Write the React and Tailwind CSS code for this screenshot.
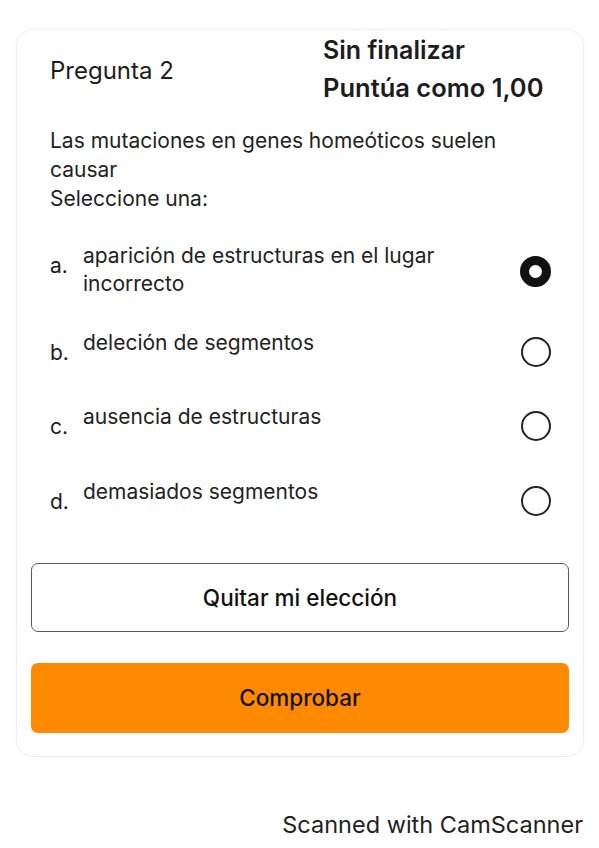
const options = [
  { letter: 'a.', text: ['aparición de estructuras en el lugar', 'incorrecto'], selected: true, h: 'h-[87px]' },
  { letter: 'b.', text: ['deleción de segmentos'], h: 'h-[74px]' },
  { letter: 'c.', text: ['ausencia de estructuras'], h: 'h-[75px]' },
  { letter: 'd.', text: ['demasiados segmentos'], h: 'h-[85px]' },
];

const Radio = ({ selected }) =>
  selected ? (
    <div className="mt-[14px] w-[31px] h-[31px] rounded-full border-[9px] border-[#111] bg-white" />
  ) : (
    <div className="mt-[8px] w-[30px] h-[30px] rounded-full border-[2px] border-[#222] bg-white" />
  );

export default function App() {
  return (
    <div className="min-h-screen w-[599px] bg-white font-['Inter',sans-serif] text-[#1c1c1e]">
      <div className="pt-[29px] px-[16px]">
        <div className="w-[568px] h-[728px] rounded-[18px] border border-[#ededf3] shadow-[0_0_6px_rgba(0,0,0,0.03)] pt-[5px]">
          {/* header */}
          <div className="flex">
            <div className="w-[306px] pl-[33px] pt-[21px] text-[24px] leading-[30px]">Pregunta 2</div>
            <div className="flex flex-col">
              <div className="text-[25px] leading-[30px] font-semibold">Sin finalizar</div>
              <div className="mt-[8px] text-[25.5px] leading-[30px] font-semibold">Puntúa como 1,00</div>
            </div>
          </div>

          {/* question */}
          <div className="pl-[33px] pr-[40px] mt-[23px] text-[21px] leading-[29px] text-[#222]">
            <p>Las mutaciones en genes homeóticos suelen causar</p>
            <p>Seleccione una:</p>
          </div>

          {/* options */}
          <div className="mt-[29px] flex flex-col">
            {options.map((o) => (
              <div key={o.letter} className={`flex items-start pl-[33px] pr-[32px] ${o.h}`}>
                <div className="w-[33px] pt-[10px] text-[21px] leading-[28px]">{o.letter}</div>
                <div className="flex-1 text-[21px] leading-[28px] text-[#222]">
                  {o.text.map((t) => (
                    <div key={t}>{t}</div>
                  ))}
                </div>
                <Radio selected={o.selected} />
              </div>
            ))}
          </div>

          {/* buttons */}
          <div className="px-[14px] flex flex-col gap-[31px]">
            <button className="h-[69px] w-full rounded-[7px] border-[1.5px] border-[#555b66] bg-white text-[22.5px] font-medium text-[#111]">
              Quitar mi elección
            </button>
            <button className="h-[70px] w-full rounded-[7px] bg-[#ff8a00] text-[22.5px] font-medium text-[#111]">
              Comprobar
            </button>
          </div>
        </div>
      </div>
      <div className="mt-[53px] pr-[16px] text-right text-[23.5px] leading-[30px] text-[#222]">Scanned with CamScanner</div>
    </div>
  );
}
